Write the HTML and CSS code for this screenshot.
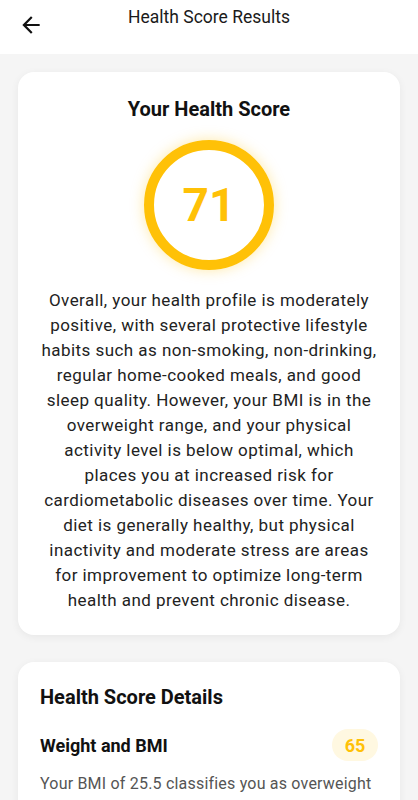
FILE: index.html
```html
<!doctype html>
<html>
 <head>
  <meta charset="utf-8">
  <link rel="stylesheet" href="styles.css">
 </head>
 <body>
  <!-- Top bar -->
  <header class="topbar">
   <button class="back" aria-label="Back">
    <svg width="26" height="26" viewBox="0 0 24 24"><path d="M20 11H7.83l5.59-5.59L12 4l-8 8 8 8 1.41-1.41L7.83 13H20v-2z" fill="#111"/></svg>
   </button>
   <h1 class="title">Health Score Results</h1>
  </header>

  <main class="content">
   <!-- Score card -->
   <section class="card score-card">
    <h2 class="score-heading">Your Health Score</h2>
    <div class="ring"><span class="ring-num">71</span></div>
    <p class="summary">Overall, your health profile is moderately positive, with several protective lifestyle habits such as non-smoking, non-drinking, regular home-cooked meals, and good sleep quality. However, your BMI is in the overweight range, and your physical activity level is below optimal, which places you at increased risk for cardiometabolic diseases over time. Your diet is generally healthy, but physical inactivity and moderate stress are areas for improvement to optimize long-term health and prevent chronic disease.</p>
   </section>

   <!-- Details card -->
   <section class="card details-card">
    <h2 class="details-heading">Health Score Details</h2>
    <div class="detail-row">
     <h3 class="detail-name">Weight and BMI</h3>
     <span class="badge">65</span>
    </div>
    <p class="detail-text">Your BMI of 25.5 classifies you as overweight (not obese), but places the upper end of normal weight range for your height.</p>
   </section>
  </main>
 </body>
</html>
```

FILE: styles.css
```css
body{
  margin: 0;
  background-color: #F5F5F5;
  font-family: Roboto, "Noto Sans", sans-serif;
  color: #1a1a1a;
}

/* top bar */
.topbar{
  height: 54px;
  background-color: #FFFFFF;
  position: relative;
}
.back{
  position: absolute;
  left: 18px;
  top: 12px;
  border: none;
  background: none;
  padding: 0;
  display: flex;
}
.title{
  margin: 0;
  padding-top: 6px;
  text-align: center;
  font-size: 17.5px;
  font-weight: 400;
  line-height: 22px;
  color: #1a1a1a;
}

.content{
  padding: 18px 18px 0 18px;
  display: flex;
  flex-direction: column;
  gap: 27px;
}

.card{
  background-color: #FFFFFF;
  border-radius: 16px;
  box-shadow: 0 2px 8px rgba(0, 0, 0, 0.06);
}

/* score card */
.score-card{
  padding: 24px 20px 22px 20px;
  display: flex;
  flex-direction: column;
  align-items: center;
}
.score-heading{
  margin: 0;
  font-size: 20px;
  line-height: 26px;
  font-weight: 700;
  color: #111;
}
.ring{
  margin-top: 18px;
  width: 110px;
  height: 110px;
  border: 10px solid #FFC107;
  border-radius: 50%;
  display: flex;
  align-items: center;
  justify-content: center;
  box-shadow: 0 0 14px rgba(255, 193, 7, 0.35);
}
.ring-num{
  font-size: 46px;
  font-weight: 700;
  color: #FFC107;
  line-height: 1;
}
.summary{
  margin: 18px 0 0 0;
  text-align: center;
  font-size: 17px;
  letter-spacing: 0.45px;
  line-height: 25px;
  color: #222;
}

/* details card */
.details-card{
  padding: 22px 22px 20px 22px;
}
.details-heading{
  margin: 0;
  font-size: 20px;
  line-height: 26px;
  font-weight: 700;
  color: #111;
}
.detail-row{
  margin-top: 19px;
  display: flex;
  align-items: center;
  justify-content: space-between;
}
.detail-name{
  margin: 0;
  font-size: 18px;
  font-weight: 700;
  color: #111;
}
.badge{
  background-color: #FFF8E1;
  color: #FFC107;
  font-weight: 700;
  font-size: 18px;
  border-radius: 16px;
  width: 46px;
  height: 32px;
  display: flex;
  align-items: center;
  justify-content: center;
}
.detail-text{
  margin: 10px 0 0 0;
  font-size: 16px;
  letter-spacing: 0.2px;
  line-height: 25px;
  font-weight: 400;
  color: #555;
}
```
